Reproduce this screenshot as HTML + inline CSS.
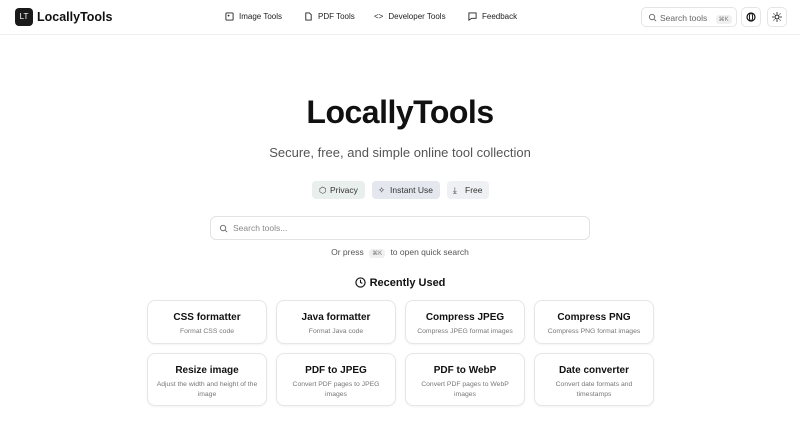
<!DOCTYPE html>
<html><head><style>
*{box-sizing:border-box;margin:0;padding:0}
body{width:800px;height:433px;overflow:hidden;font-family:"Liberation Sans",sans-serif;color:#111;background:#fff;position:relative}
.hdr{position:absolute;left:0;top:0;width:800px;height:35px;border-bottom:1px solid #eee;background:#fff}
.logo{position:absolute;left:15px;top:8px;width:18px;height:18px;background:#1a1a1a;border-radius:4px;color:#fff;font-size:8px;line-height:18px;text-align:center}
.brand{position:absolute;left:37px;top:10px;font-size:12.5px;font-weight:bold}
.nav{position:absolute;top:12px;font-size:8px;color:#222;display:flex;align-items:center;gap:5px}
.nav svg{width:9px;height:9px}
.sbox{position:absolute;left:641px;top:7px;width:96px;height:20px;border:1px solid #e5e5e5;border-radius:5px;font-size:8.5px;color:#666;padding:5px 0 0 18px}
.kbd{display:inline-block;background:#f0f0f0;border-radius:3px;font-size:6px;padding:1px 3px;color:#777}
.ib{position:absolute;top:7px;width:20px;height:20px;border:1px solid #e5e5e5;border-radius:5px}
h1{position:absolute;top:94px;width:800px;text-align:center;font-size:32px;font-weight:bold;letter-spacing:-0.5px}
.sub{position:absolute;top:145px;width:800px;text-align:center;font-size:13px;color:#555}
.badge{position:absolute;top:181px;height:18px;border-radius:4px;font-size:8.5px;color:#333;line-height:18px;padding-left:18px}
.search{position:absolute;left:210px;top:216px;width:380px;height:24px;border:1px solid #e3e3e3;border-radius:6px;font-size:8.5px;color:#888;padding:6px 0 0 22px;background:#fff}
.or{position:absolute;top:247px;width:800px;text-align:center;font-size:8.5px;color:#555}
.ru{position:absolute;top:277px;width:800px;text-align:center;font-size:11px;font-weight:bold}
.card{position:absolute;width:120px;border:1px solid #e6e6e6;border-radius:8px;text-align:center;box-shadow:0 1px 2px rgba(0,0,0,.05);background:#fff}
.card b{display:block;font-size:10px;margin-top:11px}
.card span{display:block;font-size:6.8px;color:#777;margin-top:4px;line-height:9.5px;padding:0 8px}
</style></head><body>
<div class="hdr">
<div class="logo">LT</div><div class="brand">LocallyTools</div>
<div class="nav" style="left:225px"><svg viewBox="0 0 10 10"><rect x="1" y="1" width="8" height="8" rx="1" fill="none" stroke="#222"/><circle cx="4" cy="4" r="1" fill="#222"/></svg>Image Tools</div>
<div class="nav" style="left:304px"><svg viewBox="0 0 10 10"><path d="M2 1h4l2 2v6H2z" fill="none" stroke="#222"/></svg>PDF Tools</div>
<div class="nav" style="left:374px"><span style="font-size:8px">&lt;&gt;</span>Developer Tools</div>
<div class="nav" style="left:468px"><svg viewBox="0 0 10 10"><path d="M1 1h8v6H4L1 9z" fill="none" stroke="#222"/></svg>Feedback</div>
<div class="sbox"><svg style="position:absolute;left:6px;top:5px" width="9" height="9" viewBox="0 0 10 10"><circle cx="4.5" cy="4.5" r="3" fill="none" stroke="#666"/><path d="M7 7l2 2" stroke="#666"/></svg>Search tools <span class="kbd" style="margin-left:6px">⌘K</span></div>
<div class="ib" style="left:741px"><svg style="margin:4px" width="10" height="10" viewBox="0 0 10 10"><circle cx="5" cy="5" r="4" fill="none" stroke="#111" stroke-width="1.2"/><ellipse cx="5" cy="5" rx="1.6" ry="4" fill="none" stroke="#111"/></svg></div>
<div class="ib" style="left:767px"><svg style="margin:4px" width="10" height="10" viewBox="0 0 10 10"><circle cx="5" cy="5" r="2" fill="none" stroke="#111"/><path d="M5 0v2M5 8v2M0 5h2M8 5h2M1.5 1.5l1 1M7.5 7.5l1 1M1.5 8.5l1-1M7.5 2.5l1-1" stroke="#111" stroke-width=".8"/></svg></div>
</div>
<h1>LocallyTools</h1>
<div class="sub">Secure, free, and simple online tool collection</div>
<div class="badge" style="left:312px;width:53px;background:#e8efec">Privacy<span style="position:absolute;left:7px;top:0">⬡</span></div>
<div class="badge" style="left:372px;width:68px;background:#e4e7ee">Instant Use<span style="position:absolute;left:6px;top:0">✧</span></div>
<div class="badge" style="left:447px;width:42px;background:#eef0f3">Free<span style="position:absolute;left:6px;top:0">⤓</span></div>
<div class="search"><svg style="position:absolute;left:8px;top:7px" width="9" height="9" viewBox="0 0 10 10"><circle cx="4.5" cy="4.5" r="3" fill="none" stroke="#666"/><path d="M7 7l2 2" stroke="#666"/></svg>Search tools...</div>
<div class="or">Or press <span class="kbd" style="margin:0 3px">⌘K</span> to open quick search</div>
<div class="ru"><svg style="vertical-align:-2px;margin-right:4px" width="11" height="11" viewBox="0 0 12 12"><circle cx="6" cy="6" r="5" fill="none" stroke="#111" stroke-width="1.3"/><path d="M6 3v3l2 1" fill="none" stroke="#111" stroke-width="1.2"/></svg>Recently Used</div>
<div class="card" style="left:147px;top:300px;height:44px"><b>CSS formatter</b><span>Format CSS code</span></div>
<div class="card" style="left:276px;top:300px;height:44px"><b>Java formatter</b><span>Format Java code</span></div>
<div class="card" style="left:405px;top:300px;height:44px"><b>Compress JPEG</b><span>Compress JPEG format images</span></div>
<div class="card" style="left:534px;top:300px;height:44px"><b>Compress PNG</b><span>Compress PNG format images</span></div>
<div class="card" style="left:147px;top:353px;height:53px"><b>Resize image</b><span>Adjust the width and height of the image</span></div>
<div class="card" style="left:276px;top:353px;height:53px"><b>PDF to JPEG</b><span>Convert PDF pages to JPEG images</span></div>
<div class="card" style="left:405px;top:353px;height:53px"><b>PDF to WebP</b><span>Convert PDF pages to WebP images</span></div>
<div class="card" style="left:534px;top:353px;height:53px"><b>Date converter</b><span>Convert date formats and timestamps</span></div>
</body></html>
